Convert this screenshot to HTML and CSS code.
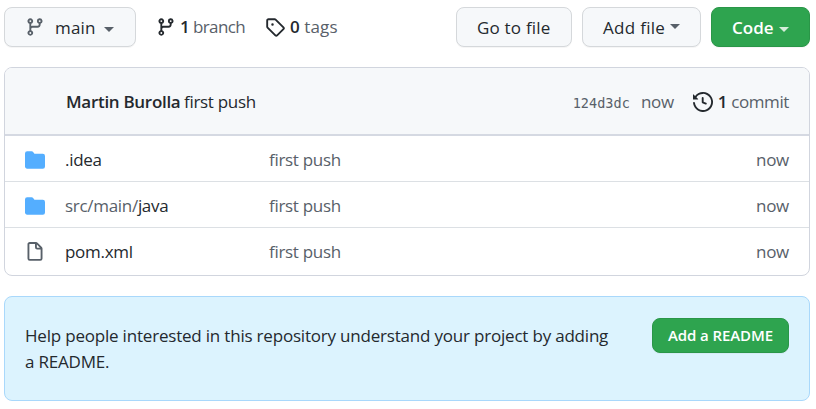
FILE: index.html
```
<!DOCTYPE html>
<html lang="en">
<head>
<meta charset="utf-8">
<title>Repository</title>
<link rel="stylesheet" href="styles.css">
</head>
<body>
<svg class="defs" width="0" height="0">
  <symbol id="branch" viewBox="0 0 16 16"><path fill-rule="evenodd" d="M11.75 2.5a.75.75 0 100 1.5.75.75 0 000-1.5zm-2.25.75a2.25 2.25 0 113 2.122V6A2.5 2.5 0 0110 8.5H6a1 1 0 00-1 1v1.128a2.251 2.251 0 11-1.5 0V5.372a2.25 2.25 0 111.5 0v1.836A2.492 2.492 0 016 7h4a1 1 0 001-1v-.628A2.25 2.25 0 019.5 3.25zM4.25 12a.75.75 0 100 1.5.75.75 0 000-1.5zM3.5 3.25a.75.75 0 111.5 0 .75.75 0 01-1.5 0z"/></symbol>
  <symbol id="folder" viewBox="0 0 16 16"><path d="M1.75 1A1.75 1.75 0 000 2.75v10.5C0 14.216.784 15 1.75 15h12.5A1.75 1.75 0 0016 13.25v-8.5A1.75 1.75 0 0014.25 3h-6.5a.25.25 0 01-.2-.1l-.9-1.2c-.33-.44-.85-.7-1.4-.7h-3.5z"/></symbol>
</svg>
<main class="repo">
  <div class="toolbar">
    <button class="btn branch-btn"><svg class="icon muted"><use href="#branch"/></svg><span class="t-main">main</span><i class="caret"></i></button>
    <a class="stat branches"><svg class="icon"><use href="#branch"/></svg><span><b>1</b> branch</span></a>
    <a class="stat tags"><svg class="icon" viewBox="0 0 16 16"><path fill-rule="evenodd" d="M2.5 7.775V2.75a.25.25 0 01.25-.25h5.025a.25.25 0 01.177.073l6.25 6.25a.25.25 0 010 .354l-5.025 5.025a.25.25 0 01-.354 0l-6.25-6.25a.25.25 0 01-.073-.177zm-1.5 0V2.75C1 1.784 1.784 1 2.75 1h5.025c.464 0 .91.184 1.238.513l6.25 6.25a1.75 1.75 0 010 2.474l-5.026 5.026a1.75 1.75 0 01-2.474 0l-6.25-6.25A1.75 1.75 0 011 7.775zM6 5a1 1 0 100 2 1 1 0 000-2z"/></svg><span><b>0</b> tags</span></a>
    <button class="btn goto"><span class="t-goto">Go to file</span></button>
    <button class="btn add"><span class="t-add">Add file</span><i class="caret raised"></i></button>
    <button class="btn primary code"><span class="t-code">Code</span><i class="caret"></i></button>
  </div>
  <section class="files">
    <header class="commit">
      <span class="author">Martin Burolla</span>
      <span class="message">first push</span>
      <code class="sha">124d3dc</code>
      <span class="now">now</span>
      <svg class="icon history" viewBox="0 0 16 16"><path fill-rule="evenodd" d="M1.643 3.143L.427 1.927A.25.25 0 000 2.104V5.75c0 .138.112.25.25.25h3.646a.25.25 0 00.177-.427L2.715 4.215a6.5 6.5 0 11-1.18 4.458.75.75 0 10-1.493.154 8.001 8.001 0 101.6-5.684zM7.75 4a.75.75 0 01.75.75v2.992l2.028.812a.75.75 0 01-.557 1.392l-2.5-1A.75.75 0 017 8.25v-3.5A.75.75 0 017.75 4z"/></svg>
      <span class="count"><b>1</b> commit</span>
    </header>
    <div class="row"><svg class="icon folder"><use href="#folder"/></svg><span class="name"><span class="t-idea">.idea</span></span><span class="message">first push</span><span class="now">now</span></div>
    <div class="row"><svg class="icon folder"><use href="#folder"/></svg><span class="name"><span class="t-java"><span class="path">src/main/</span>java</span></span><span class="message">first push</span><span class="now">now</span></div>
    <div class="row"><svg class="icon muted" viewBox="0 0 16 16"><path fill-rule="evenodd" d="M3.75 1.5a.25.25 0 00-.25.25v11.5c0 .138.112.25.25.25h8.5a.25.25 0 00.25-.25V6H9.75A1.75 1.75 0 018 4.25V1.5H3.75zm5.75.56v2.19c0 .138.112.25.25.25h2.19L9.5 2.06zM2 1.75C2 .784 2.784 0 3.75 0h5.086c.464 0 .909.184 1.237.513l3.414 3.414c.329.328.513.773.513 1.237v8.086A1.75 1.75 0 0112.25 15h-8.5A1.75 1.75 0 012 13.25V1.75z"/></svg><span class="name"><span class="t-pom">pom.xml</span></span><span class="message">first push</span><span class="now">now</span></div>
  </section>
  <section class="notice">
    <p><span class="help">Help people interested in this repository understand your project by adding</span><br><span class="help2">a README.</span></p>
    <button class="btn primary readme"><span class="t-readme">Add a README</span></button>
  </section>
</main>
</body>
</html>
```
FILE: styles.css
```
* { box-sizing: border-box; }
body { margin: 0; background: #fff; color: #24292e; font: 400 17px/26px "Open Sans", "Noto Sans", sans-serif; letter-spacing: -.2px; white-space: nowrap; }
b { font-weight: 600; }
.defs { position: absolute; }
.repo { width: 806px; margin-left: 4px; padding-top: 7px; }
.toolbar { display: flex; height: 40px; }
.icon { width: 20px; height: 20px; fill: #24292e; flex: none; }
.muted { fill: #586069; }
.btn { display: flex; align-items: center; height: 40px; padding: 0 20px; border: 1px solid #d5d8db; border-radius: 8px; background: #f6f8fa; color: #24292e; font: 500 17px/26px "Open Sans", "Noto Sans", sans-serif; letter-spacing: .2px; box-shadow: 0 1px 0 rgba(27,31,35,.04); }
.caret { width: 0; height: 0; border: 5px solid transparent; border-top-color: #586069; border-bottom: 0; margin: 4px 1px 0 auto; }
.raised { margin-top: 0; margin-bottom: 2px; margin-right: 0; }
.primary { background: #2ea44f; border-color: #2a9648; color: #fff; font-weight: 600; letter-spacing: 0; }
.primary .caret { border-top-color: #d5edda; margin-right: 0; }
.branch-btn { width: 132px; }
.t-main { margin: 2px 0 0 10px; }
.t-goto, .t-add, .t-code { margin-top: 1px; }
.t-add { letter-spacing: .3px; }
.stat { display: flex; align-items: center; height: 40px; color: #586069; letter-spacing: -.6px; }
.stat b, .count b { color: #24292e; }
.branches { width: 109px; margin-left: 20px; gap: 4px; }
.tags { gap: 5px; letter-spacing: .1px; }
.goto { width: 116px; margin-left: auto; }
.add { width: 119px; margin-left: 10px; }
.code { width: 99px; margin-left: 10px; }
.files { height: 209px; margin-top: 20px; border: 1px solid #d1d5de; border-radius: 8px; overflow: hidden; }
.commit { display: flex; align-items: center; height: 68px; padding: 2px 20px 0 61px; background: #f6f8fa; border-bottom: 2px solid #d5d9e2; }
.author { width: 118px; font-weight: 600; letter-spacing: -.3px; }
.message { letter-spacing: -.3px; }
.sha { margin-left: auto; color: #586069; font: 13.5px/26px "DejaVu Sans Mono", monospace; letter-spacing: .05px; padding-top: 2px; }
.commit .now { margin-left: 11px; }
.now { color: #586069; letter-spacing: -.3px; }
.history { margin-left: 19px; }
.count { margin-left: 5px; color: #586069; letter-spacing: -.4px; }
.row { display: flex; align-items: center; height: 45px; padding: 2px 20px 0; }
.row + .row { height: 46px; border-top: 1px solid #dce0e4; }
.folder { fill: #54aeff; }
.name { width: 204px; margin-left: 20px; letter-spacing: -.3px; }
.row .message, .path { color: #586069; }
.row .now { margin-left: auto; }
.notice { display: flex; justify-content: space-between; height: 105px; margin-top: 20px; padding: 21px 20px; border: 1px solid #a9d8fb; border-radius: 8px; background: #dcf3fe; }
.notice p { margin: 5px 0 0; }
.readme { width: 137px; height: 35px; padding: 0 15px; font-size: 15px; letter-spacing: -.1px; }
.t-readme { margin-bottom: 1px; }
```
